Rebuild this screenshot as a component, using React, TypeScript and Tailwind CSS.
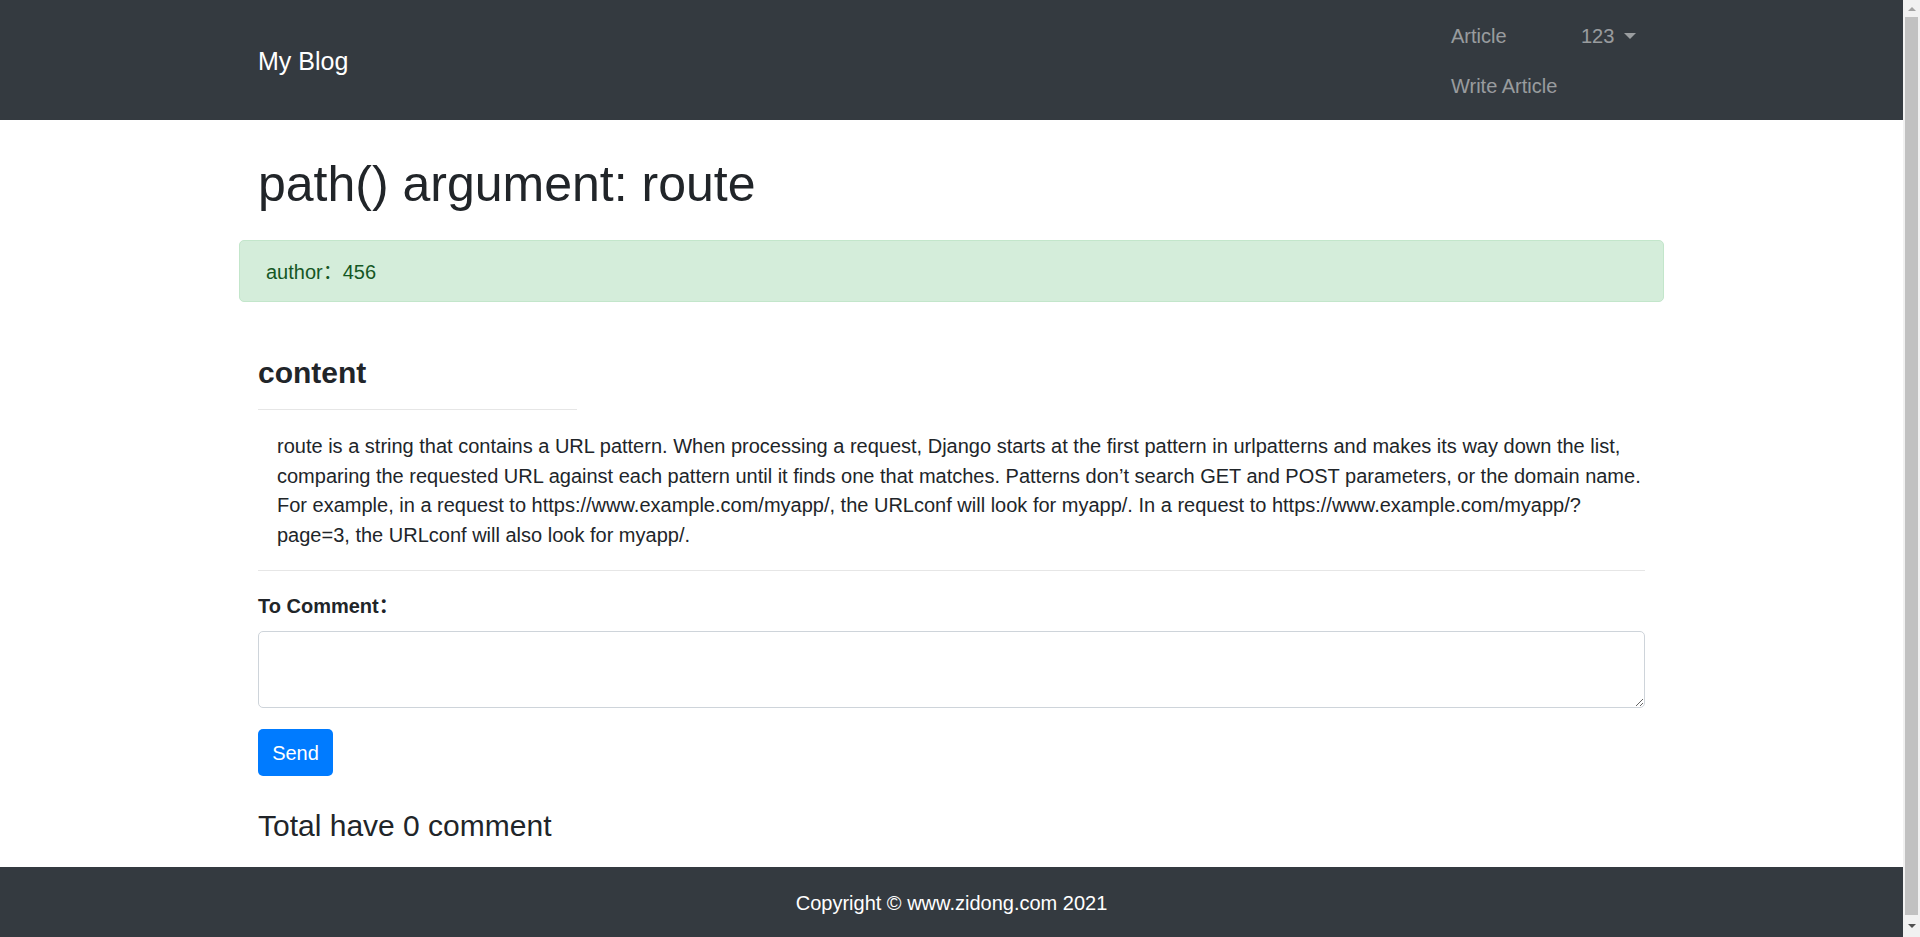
import React from 'react';

const paragraph = [
  'route is a string that contains a URL pattern. When processing a request, Django starts at the first pattern in urlpatterns and makes its way down the list,',
  'comparing the requested URL against each pattern until it finds one that matches. Patterns don’t search GET and POST parameters, or the domain name.',
  'For example, in a request to https://www.example.com/myapp/, the URLconf will look for myapp/. In a request to https://www.example.com/myapp/?',
  'page=3, the URLconf will also look for myapp/.',
];

const Navbar: React.FC = () => (
  <nav className="h-[120px] bg-[#343a40] pb-[9px] pt-[11px]">
    <div className="mx-auto flex h-full w-[1425px] items-center justify-between px-[19px]">
      <a href="#" className="text-[25px] leading-[38px] text-white">My Blog</a>
      <div className="grid w-[194px] grid-cols-[130px_1fr] text-[20px] text-white/50">
        <a href="#" className="flex h-[50px] items-center">Article</a>
        <a href="#" className="flex h-[50px] items-center">
          123
          <span className="ml-[10px] inline-block h-0 w-0 border-x-[6px] border-t-[6px] border-x-transparent border-t-[#9a9da0]" />
        </a>
        <a href="#" className="col-span-2 flex h-[50px] items-center">Write Article</a>
      </div>
    </div>
  </nav>
);

const Scrollbar: React.FC = () => (
  <div className="flex w-[17px] flex-col bg-[#f1f1f1]">
    <div className="flex h-[17px] items-center justify-center">
      <span className="h-0 w-0 border-x-[4px] border-b-[4px] border-x-transparent border-b-[#a3a3a3]" />
    </div>
    <div className="mx-[2px] flex-1 bg-[#c1c1c1]" />
    <div className="flex h-[22px] items-center justify-center">
      <span className="h-0 w-0 border-x-[4px] border-t-[4px] border-x-transparent border-t-[#505050]" />
    </div>
  </div>
);

export default function App() {
  return (
    <div className="flex h-[937px] overflow-hidden bg-white font-['Liberation_Sans','Noto_Sans_CJK_SC',Arial,sans-serif] text-[#212529]">
      <div className="flex flex-1 flex-col">
        <Navbar />

        <main className="flex-1">
          <div className="mx-auto w-[1425px] px-[19px]">
            <h1 className="mt-[34px] text-[50px] font-medium leading-[60px]">path() argument: route</h1>

            <div className="-mx-[19px] mt-[26px] rounded-[5px] border border-[#c3e6cb] bg-[#d4edda] px-[26px] pb-[14px] pt-[16px] text-[20px] leading-[30px] text-[#155724]">
              author：456
            </div>

            <h4 className="mt-[53px] text-[30px] font-bold leading-[36px]">content</h4>
            <hr className="mt-[18px] w-[319px] border-t border-[#e6e6e6]" />

            <p className="mt-[22px] pl-[19px] text-[20px] leading-[29.5px]">
              {paragraph.map((line, i) => (
                <span key={i} className="block whitespace-nowrap">{line}</span>
              ))}
            </p>
            <hr className="mt-[20px] border-t border-[#e6e6e6]" />

            <label className="mt-[20px] block text-[20px] font-bold leading-[30px]">To Comment：</label>
            <textarea className="mt-[10px] block h-[77px] w-full rounded-[5px] border border-[#ced4da] px-[15px] py-[8px] text-[20px] outline-none" />

            <button className="mt-[21px] flex h-[47px] w-[75px] items-center justify-center rounded-[5px] bg-[#007bff] text-[20px] text-white">
              Send
            </button>

            <h4 className="mt-[32px] text-[30px] font-medium leading-[36px]">Total have 0 comment</h4>
          </div>
        </main>

        <footer className="flex h-[70px] items-center justify-center bg-[#343a40] pt-[2px] text-[20px] text-white">
          Copyright © www.zidong.com 2021
        </footer>
      </div>
      <Scrollbar />
    </div>
  );
}
